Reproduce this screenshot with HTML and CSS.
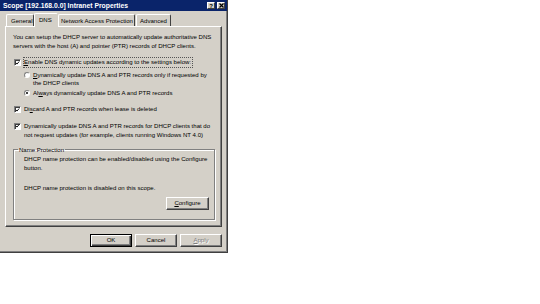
FILE: index.html
```html
<!DOCTYPE html>
<html lang="en">
  <head>
    <meta charset="UTF-8" />
    <meta name="viewport" content="width=device-width, initial-scale=1.0" />
    <title>Scope Properties</title>
    <link rel="stylesheet" href="styles.css">
  </head>
  <body>
    <div class="window">
      <div class="titlebar">
        <span class="title">Scope [192.168.0.0] Intranet Properties</span>
        <div class="caption-buttons">
          <span class="cbtn help">?</span>
          <span class="cbtn close">
            <svg width="5" height="5" viewBox="0 0 5 5"><path d="M0.5 0.5 L4.5 4.5 M4.5 0.5 L0.5 4.5" stroke="#000" stroke-width="1.2"/></svg>
          </span>
        </div>
      </div>

      <div class="tabs">
        <span class="tab">General</span>
        <span class="tab active">DNS</span>
        <span class="tab">Network Access Protection</span>
        <span class="tab">Advanced</span>
      </div>

      <div class="panel">
        <p class="intro">You can setup the DHCP server to automatically update authoritative DNS servers with the host (A) and pointer (PTR) records of DHCP clients.</p>

        <div class="option first">
          <span class="box"><svg width="6" height="6" viewBox="0 0 6 6"><path d="M1 2.8 L2.4 4.3 L5 1.2" fill="none" stroke="#000" stroke-width="1.1"/></svg></span>
          <span class="label focus key">Enable DNS dynamic updates according to the settings below:</span>
        </div>

        <div class="option radio-one">
          <span class="radio"></span>
          <span class="label key">Dynamically update DNS A and PTR records only if requested by the DHCP clients</span>
        </div>

        <div class="option radio-two">
          <span class="radio on"></span>
          <span class="label">Al<u>w</u>ays dynamically update DNS A and PTR records</span>
        </div>

        <div class="option discard">
          <span class="box"><svg width="6" height="6" viewBox="0 0 6 6"><path d="M1 2.8 L2.4 4.3 L5 1.2" fill="none" stroke="#000" stroke-width="1.1"/></svg></span>
          <span class="label">Di<u>s</u>card A and PTR records when lease is deleted</span>
        </div>

        <div class="option legacy">
          <span class="box"><svg width="6" height="6" viewBox="0 0 6 6"><path d="M1 2.8 L2.4 4.3 L5 1.2" fill="none" stroke="#000" stroke-width="1.1"/></svg></span>
          <span class="label">Dynamically update DNS A and PTR records for DHCP clients that do not request updates (for example, clients running Windows NT 4.0)</span>
        </div>

        <fieldset class="group">
          <legend>Name Protection</legend>
          <p class="group-text">DHCP name protection can be enabled/disabled using the Configure button.</p>
          <p class="group-status">DHCP name protection is disabled on this scope.</p>
          <div class="group-actions">
            <span class="button configure key">Configure</span>
          </div>
        </fieldset>
      </div>

      <div class="buttons">
        <span class="button default">OK</span>
        <span class="button">Cancel</span>
        <span class="button disabled key">Apply</span>
      </div>
    </div>
  </body>
</html>
```

FILE: styles.css
```css
body {
  margin: 0;
  background-color: #fff;
  font-family: "Liberation Sans", Arial, sans-serif;
  font-size: 6.05px;
  color: #000;
}

p {
  margin: 0;
}

u,
.key::first-letter {
  text-decoration: underline;
  text-decoration-thickness: 0.5px;
  text-underline-offset: 1px;
}

.window {
  box-sizing: border-box;
  width: 228px;
  height: 253px;
  padding: 0 2px 2px 2px;
  background-color: #d4d0c8;
  border-right: 1px solid #404040;
  border-bottom: 1px solid #404040;
  box-shadow: inset -1px -1px #808080;
}

.titlebar {
  display: flex;
  justify-content: space-between;
  align-items: center;
  height: 11px;
  margin: 0 -2px;
  padding: 0 2px 0 3px;
  background-color: #0a246a;
}

.title {
  color: #fff;
  font-weight: bold;
  font-size: 6.8px;
}

.caption-buttons {
  display: flex;
  gap: 2px;
}

.cbtn {
  box-sizing: border-box;
  display: flex;
  justify-content: center;
  align-items: center;
  width: 8px;
  height: 7px;
  background-color: #d4d0c8;
  border-top: 1px solid #fff;
  border-left: 1px solid #fff;
  border-right: 1px solid #404040;
  border-bottom: 1px solid #404040;
  font-weight: bold;
  font-size: 6px;
  line-height: 6px;
}

.tabs {
  display: flex;
  align-items: flex-end;
  height: 14px;
  margin-top: 2px;
  padding-left: 4px;
  position: relative;
  z-index: 1;
}

.tab {
  box-sizing: border-box;
  height: 12px;
  padding: 2px 2px 0;
  line-height: 8px;
  background-color: #d4d0c8;
  border-top: 1px solid #fff;
  border-left: 1px solid #fff;
  border-right: 1px solid #404040;
  border-radius: 2px 2px 0 0;
  margin-bottom: 1px;
  white-space: nowrap;
  overflow: hidden;
}

.tab:nth-child(1) {
  width: 28px;
  padding-left: 4px;
}

.tab.active {
  width: 24px;
  height: 14px;
  margin-bottom: 0;
  padding-top: 2px;
  padding-left: 4px;
  border-right-color: #d4d0c8;
}

.tab:nth-child(3) {
  width: 77px;
  padding-left: 2px;
}

.tab:nth-child(4) {
  width: 35px;
  margin-left: 1px;
  padding-left: 3px;
}

.panel {
  box-sizing: border-box;
  width: 217px;
  height: 201px;
  margin: -1px 0 0 3px;
  padding: 6px 6px 0 7px;
  border-top: 1px solid #fff;
  border-left: 1px solid #fff;
  border-right: 1px solid #404040;
  border-bottom: 1px solid #404040;
  box-shadow: inset -1px -1px #808080;
}

.intro {
  line-height: 9px;
}

.option {
  display: flex;
  align-items: flex-start;
  line-height: 8.5px;
}

.option .label {
  display: block;
}

.option.first {
  margin-top: 7px;
  padding-left: 1px;
}

.option.radio-one {
  margin-top: 4px;
  padding-left: 11px;
  padding-right: 4px;
}

.option.radio-two {
  margin-top: 1px;
  padding-left: 11px;
}

.option.discard {
  margin-top: 8px;
  padding-left: 1px;
}

.option.legacy {
  margin-top: 8px;
  padding-left: 1px;
  line-height: 9px;
}

.box {
  box-sizing: border-box;
  flex: none;
  display: flex;
  justify-content: center;
  align-items: center;
  width: 7px;
  height: 7px;
  margin-top: 1px;
  margin-right: 3px;
  background-color: #fff;
  border-top: 1px solid #808080;
  border-left: 1px solid #808080;
  border-right: 1px solid #fff;
  border-bottom: 1px solid #fff;
  box-shadow: inset 1px 1px #404040;
}

.radio {
  box-sizing: border-box;
  flex: none;
  width: 6px;
  height: 6px;
  margin-top: 1px;
  margin-right: 3px;
  border-radius: 50%;
  background-color: #fff;
  border: 1px solid #808080;
  border-right-color: #fff;
  border-bottom-color: #fff;
  position: relative;
}

.radio.on::after {
  content: "";
  position: absolute;
  left: 1px;
  top: 1px;
  width: 2px;
  height: 2px;
  border-radius: 50%;
  background-color: #000;
}

.label.focus {
  outline: 1px dotted #555;
  outline-offset: 0;
  padding-right: 1px;
}

.group {
  margin: 6px 0 0 0;
  padding: 1px 5px 9px 10px;
  border: 1px solid #808080;
  box-shadow: 1px 1px #fff, inset 1px 1px #fff;
  line-height: 8.5px;
}

.group legend {
  margin-left: -6px;
  padding: 0 1px;
}

.group-status {
  margin-top: 12px;
}

.group-actions {
  display: flex;
  justify-content: flex-end;
  margin-top: 4px;
}

.button {
  box-sizing: border-box;
  display: block;
  width: 42px;
  height: 13px;
  line-height: 11px;
  text-align: center;
  background-color: #d4d0c8;
  border-top: 1px solid #fff;
  border-left: 1px solid #fff;
  border-right: 1px solid #404040;
  border-bottom: 1px solid #404040;
  box-shadow: inset -1px -1px #808080;
}

.button.configure {
  width: 43px;
}

.button.default {
  border: 1px solid #000;
  box-shadow: inset 1px 1px #fff, inset -1px -1px #404040, inset -2px -2px #808080;
}

.button.disabled {
  color: #808080;
  text-shadow: 1px 1px #fff;
}

.buttons {
  display: flex;
  justify-content: flex-end;
  gap: 3px;
  margin-top: 7px;
  padding-right: 3px;
}
```
